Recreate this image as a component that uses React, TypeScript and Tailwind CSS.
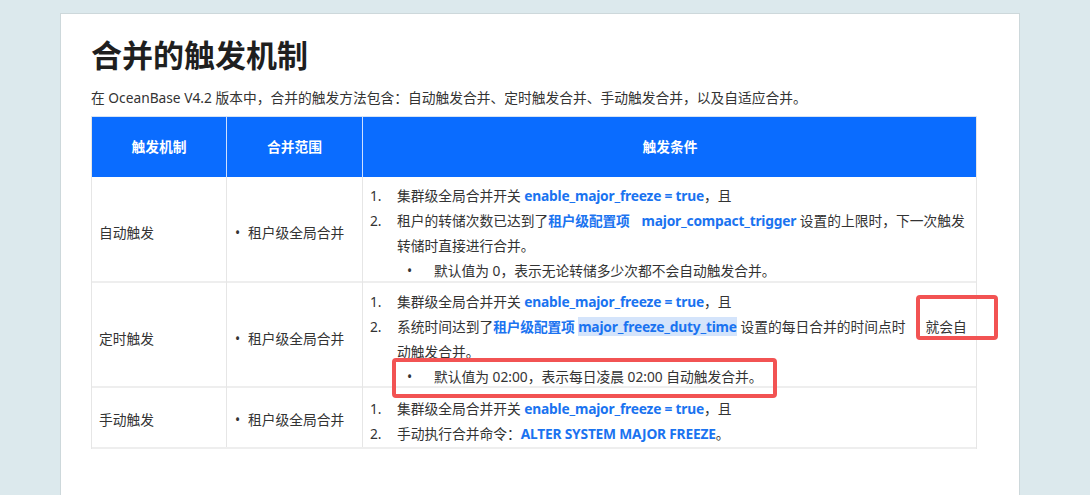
import React from "react";

const font = { fontFamily: '"Noto Sans", "Noto Sans CJK SC", sans-serif' };

function Code({ children, hl }: { children: React.ReactNode; hl?: boolean }) {
  return (
    <span className={`font-bold tracking-[-0.2px] text-[#1a73f0] ${hl ? "bg-[#d4e4fb]" : ""}`}>{children}</span>
  );
}

function Num({ n, children }: { n: string; children: React.ReactNode }) {
  return (
    <div className="flex whitespace-nowrap">
      <span className="w-[34px] shrink-0 pl-[7px]">{n}</span>
      <div>{children}</div>
    </div>
  );
}

function Sub({ children }: { children: React.ReactNode }) {
  return (
    <div className="flex whitespace-nowrap">
      <span className="w-[71px] shrink-0 pl-[44px]">•</span>
      <span>{children}</span>
    </div>
  );
}

function Row({
  name,
  h,
  children,
}: {
  name: string;
  h: string;
  children: React.ReactNode;
}) {
  return (
    <div className={`grid grid-cols-[135px_136px_614px] border-b-2 border-[#eeeeee] ${h}`}>
      <div className="flex items-center pt-[6px] pl-[7px] border-r border-[#e6e6e6]">{name}</div>
      <div className="flex items-center pt-[6px] border-r border-[#e6e6e6]">
        <span className="w-[21px] pl-[8px]">•</span>
        <span>租户级全局合并</span>
      </div>
      <div className="flex flex-col justify-center pt-[6px] leading-[25px]">{children}</div>
    </div>
  );
}

export default function App() {
  return (
    <div className="w-[1090px] h-[495px] overflow-hidden bg-[#dce9ed]" style={font}>
      <div className="relative ml-[60px] mt-[13px] w-[960px] h-[482px] bg-white border-l border-t border-r border-[#cdd8db] pl-[30px] pt-[23px]">
        <h1 className="text-[31px] leading-[36px] font-bold text-[#1f1f1f]">合并的触发机制</h1>
        <p className="mt-[14px] text-[13.75px] leading-[22px] text-[#333]">
          在 OceanBase V4.2 版本中，合并的触发方法包含：自动触发合并、定时触发合并、手动触发合并，以及自适应合并。
        </p>
        <div className="mt-[7px] w-[886px] border-l border-r border-[#e6e6e6] text-[13.75px] text-[#333]">
          <div className="grid grid-cols-[135px_136px_614px] h-[61px] bg-[#0a6cff] text-white font-bold border-t border-[#d5e3f5]">
            <div className="flex items-center justify-center border-r border-[#cfe0ff]">触发机制</div>
            <div className="flex items-center justify-center border-r border-[#cfe0ff]">合并范围</div>
            <div className="flex items-center justify-center">触发条件</div>
          </div>
          <Row name="自动触发" h="h-[106px]">
            <Num n="1.">
              集群级全局合并开关 <Code>enable_major_freeze = true</Code>，且
            </Num>
            <Num n="2.">
              <div>
                租户的转储次数已达到了<Code>租户级配置项</Code>
                <span className="inline-block w-[12px]" />
                <Code>major_compact_trigger</Code> 设置的上限时，下一次触发
              </div>
              <div>转储时直接进行合并。</div>
            </Num>
            <Sub>默认值为 0，表示无论转储多少次都不会自动触发合并。</Sub>
          </Row>
          <Row name="定时触发" h="h-[105px]">
            <Num n="1.">
              集群级全局合并开关 <Code>enable_major_freeze = true</Code>，且
            </Num>
            <Num n="2.">
              <div>
                系统时间达到了<Code>租户级配置项</Code> <Code hl>major_freeze_duty_time</Code>{" "}
                设置的每日合并的时间点时
                <span className="inline-block w-[20px]" />
                就会自
              </div>
              <div>动触发合并。</div>
            </Num>
            <Sub>默认值为 02:00，表示每日凌晨 02:00 自动触发合并。</Sub>
          </Row>
          <Row name="手动触发" h="h-[61px]">
            <Num n="1.">
              集群级全局合并开关 <Code>enable_major_freeze = true</Code>，且
            </Num>
            <Num n="2.">
              手动执行合并命令：<Code>ALTER SYSTEM MAJOR FREEZE</Code>。
            </Num>
          </Row>
        </div>
        <div className="absolute left-[855px] top-[281px] w-[82px] h-[45px] border-[4px] border-[#f25353] rounded-[4px]" />
        <div className="absolute left-[331px] top-[344px] w-[385px] h-[40px] border-[4px] border-[#f25353] rounded-[4px]" />
      </div>
    </div>
  );
}
